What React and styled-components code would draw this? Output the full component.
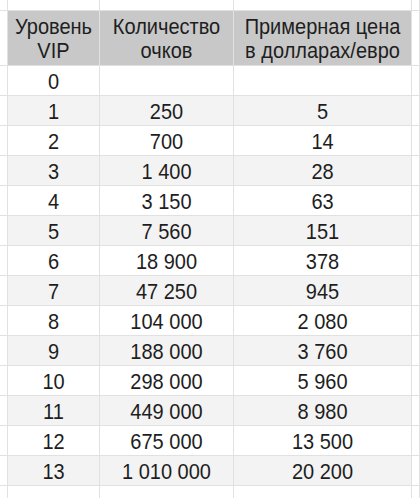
import React from "react";
import styled, { createGlobalStyle } from "styled-components";

const GlobalStyle = createGlobalStyle`
  html, body {
    margin: 0;
    padding: 0;
    background: #ffffff;
  }
  body {
    font-family: "Liberation Sans", Arial, sans-serif;
    color: #1e1e1e;
  }
`;

const rows = [
  ["0", "", ""],
  ["1", "250", "5"],
  ["2", "700", "14"],
  ["3", "1 400", "28"],
  ["4", "3 150", "63"],
  ["5", "7 560", "151"],
  ["6", "18 900", "378"],
  ["7", "47 250", "945"],
  ["8", "104 000", "2 080"],
  ["9", "188 000", "3 760"],
  ["10", "298 000", "5 960"],
  ["11", "449 000", "8 980"],
  ["12", "675 000", "13 500"],
  ["13", "1 010 000", "20 200"],
];

const Sheet = styled.div`
  width: 420px;
  height: 498px;
  overflow: hidden;
  display: flex;
  flex-direction: column;
`;

const Row = styled.div`
  display: grid;
  grid-template-columns: 8px 92px 134px 178px 1fr;
  height: ${(p) => p.$h}px;
  flex: none;
`;

const Cell = styled.div`
  box-sizing: border-box;
  border-right: 1px solid #e1e1e1;
  border-bottom: 1px solid #e1e1e1;
  background: ${(p) => (p.$head ? "#c8c8c8" : p.$shade ? "#f3f3f3" : "#ffffff")};
  display: flex;
  align-items: center;
  justify-content: center;
  padding-top: ${(p) => (p.$head ? 1 : 0)}px;
  text-align: center;
  font-size: 20px;
  line-height: ${(p) => (p.$head ? 23 : 24)}px;
  color: #1e1e1e;
  white-space: pre-line;
  overflow: visible;
`;

const Text = styled.span`
  display: inline-block;
  transform: scaleY(1.08);
`;

const Edge = styled(Cell)`
  background: #ffffff;
`;

export default function App() {
  return (
    <>
      <GlobalStyle />
      <Sheet>
        <Row $h={11}>
          <Edge />
          <Cell />
          <Cell />
          <Cell />
          <Edge />
        </Row>
        <Row $h={55}>
          <Edge />
          <Cell $head>
            <Text>{"Уровень\nVIP"}</Text>
          </Cell>
          <Cell $head>
            <Text>{"Количество\nочков"}</Text>
          </Cell>
          <Cell $head>
            <Text>{"Примерная цена\nв долларах/евро"}</Text>
          </Cell>
          <Edge />
        </Row>
        {rows.map((r, i) => (
          <Row $h={30} key={r[0]}>
            <Edge />
            {r.map((v, j) => (
              <Cell key={j} $shade={i % 2 === 1}>
                <Text>{v}</Text>
              </Cell>
            ))}
            <Edge />
          </Row>
        ))}
        <Row $h={20}>
          <Edge />
          <Cell />
          <Cell />
          <Cell />
          <Edge />
        </Row>
      </Sheet>
    </>
  );
}
